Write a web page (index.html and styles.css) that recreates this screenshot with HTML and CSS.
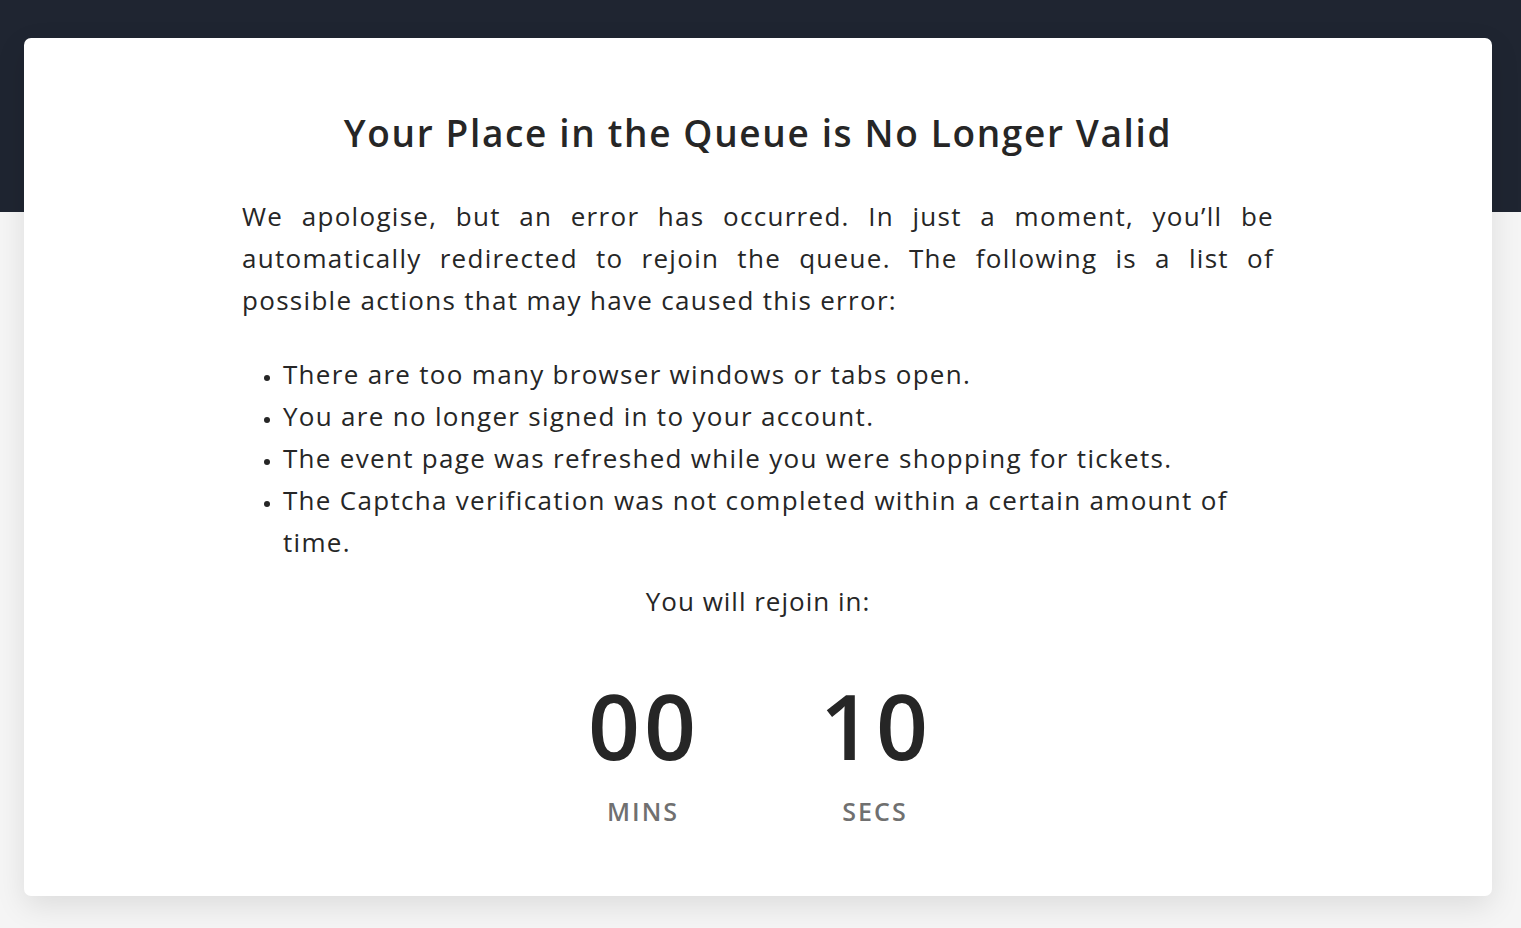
FILE: index.html
```html
<!DOCTYPE html>
<html lang="en">
<head>
<meta charset="utf-8">
<title>Your Place in the Queue is No Longer Valid</title>
<link rel="stylesheet" href="styles.css">
</head>
<body>
<div class="band"></div>
<main class="page">
  <section class="card">
    <div class="content">
      <h1 class="title">Your Place in the Queue is No Longer Valid</h1>
      <p class="intro">We apologise, but an error has occurred. In just a moment, you’ll be automatically redirected to rejoin the queue. The following is a list of possible actions that may have caused this error:</p>
      <ul class="reasons">
        <li>There are too many browser windows or tabs open.</li>
        <li>You are no longer signed in to your account.</li>
        <li>The event page was refreshed while you were shopping for tickets.</li>
        <li>The Captcha verification was not completed within a certain amount of time.</li>
      </ul>
      <p class="rejoin">You will rejoin in:</p>
      <div class="countdown">
        <div class="unit">
          <div class="num">00</div>
          <div class="label">MINS</div>
        </div>
        <div class="unit">
          <div class="num">10</div>
          <div class="label">SECS</div>
        </div>
      </div>
    </div>
  </section>
</main>
</body>
</html>
```

FILE: styles.css
```css
html, body {
  margin: 0;
  padding: 0;
}
body {
  background: #f5f5f5;
  font-family: "Open Sans", "Lato", sans-serif;
  color: #262626;
  min-height: 928px;
}
.band {
  height: 212px;
  background: #1f2531;
}
.page {
  margin-top: -174px;
  padding: 0 29px 0 24px;
}
.card {
  background: #ffffff;
  border-radius: 7px;
  box-shadow: 0 10px 30px rgba(0, 0, 0, 0.10);
  height: 858px;
  box-sizing: border-box;
  padding-top: 72px;
}
.content {
  width: 1032px;
  margin: 0 auto;
}
.title {
  margin: 0;
  text-align: center;
  font-size: 37px;
  line-height: 46px;
  font-weight: 600;
  letter-spacing: 1.65px;
  color: #262626;
}
.intro {
  margin: 39px 0 0;
  font-size: 26px;
  line-height: 42px;
  letter-spacing: 1.3px;
  text-align: justify;
}
.reasons {
  margin: 32px 0 0;
  padding-left: 41px;
  font-size: 26px;
  line-height: 42px;
  letter-spacing: 1.3px;
}
.reasons li {
  padding-left: 0;
}
.reasons li::marker {
  font-size: 17px;
  letter-spacing: 4px;
}
.rejoin {
  margin: 17px 0 0;
  text-align: center;
  font-size: 26px;
  line-height: 42px;
  letter-spacing: 1px;
}
.countdown {
  display: flex;
  justify-content: center;
  gap: 120px;
  margin-top: 55px;
}
.unit {
  display: flex;
  flex-direction: column;
  align-items: center;
  width: 112px;
}
.num {
  font-size: 91px;
  line-height: 96px;
  font-weight: 600;
  letter-spacing: 4px;
  padding-left: 4px;
  color: #262626;
}
.label {
  margin-top: 23px;
  font-size: 25px;
  line-height: 30px;
  font-weight: 600;
  letter-spacing: 2px;
  padding-left: 2px;
  color: #707070;
}
```
